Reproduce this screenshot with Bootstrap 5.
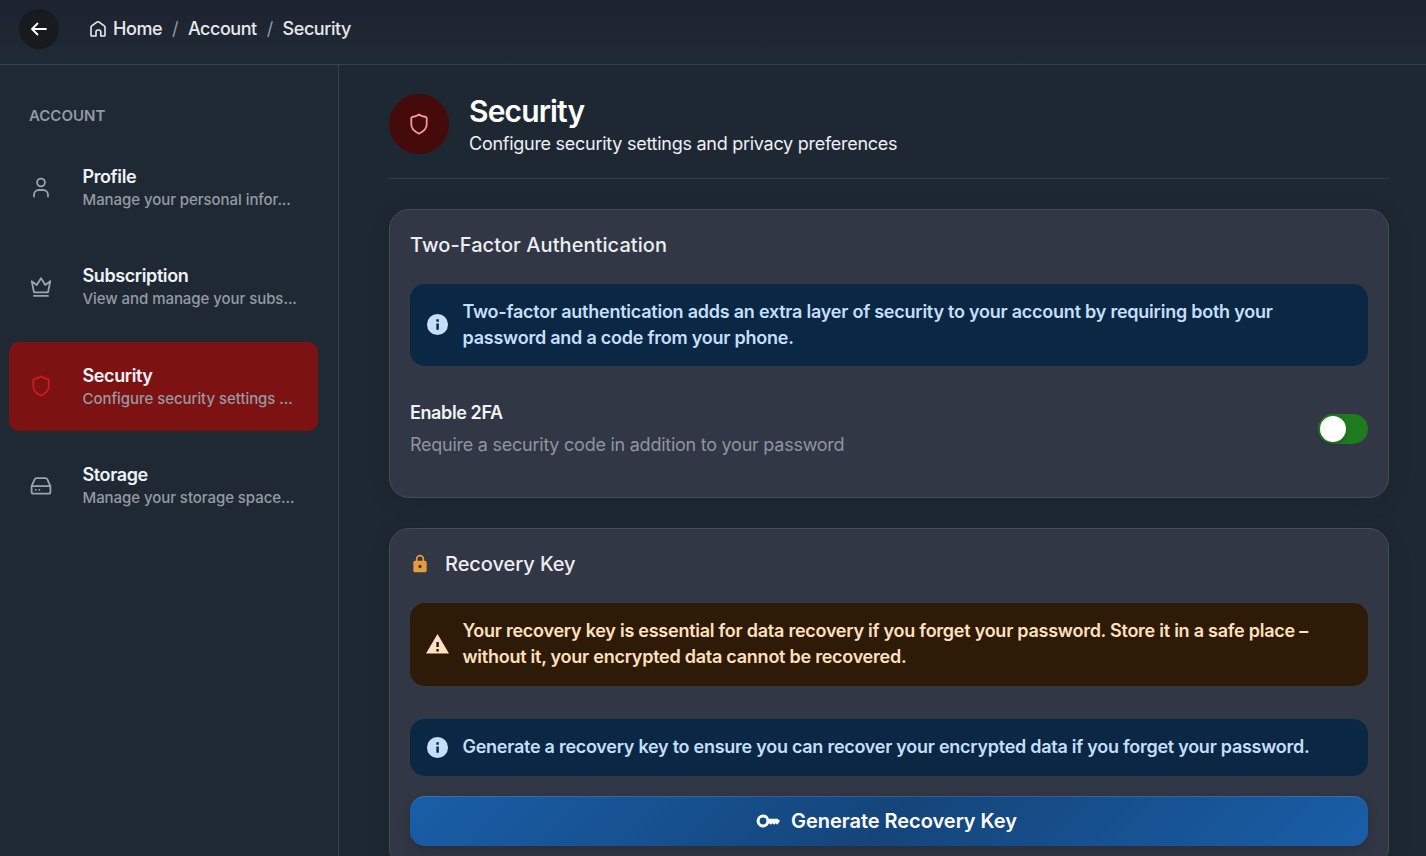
<!DOCTYPE html>
<html lang="en" data-bs-theme="dark">
<head>
<meta charset="utf-8">
<meta name="viewport" content="width=device-width, initial-scale=1">
<title>Security</title>
<link href="https://cdn.jsdelivr.net/npm/bootstrap@5.3.0/dist/css/bootstrap.min.css" rel="stylesheet">
<style>
  body { font-family: Inter, "Liberation Sans", sans-serif; font-size: 18px; color: #f0f2f8; background: #1e2832; height: 100vh; }
  svg { flex: none; display: block; }
  .line { fill: none; stroke: currentColor; stroke-width: 1.8; stroke-linecap: round; stroke-linejoin: round; }
  .topbar { height: 65px; padding: 0 19px 7px; border-bottom: 1px solid #364049; background: linear-gradient(#1e2231 0%, #1e2832 65%, #1f2a38 100%); }
  .back-btn { width: 40px; height: 40px; background: #181b1d; }
  .crumbs { margin-left: 31px; letter-spacing: -.45px; line-height: 27px; font-weight: 500; color: #e6e9ed; }
  .crumbs svg { margin-right: 7px; stroke-width: 1.6; }
  .crumbs .sep { color: #91979d; font-weight: 400; margin: 0 9.9px; }
  .sidebar { width: 339px; flex: none; border-right: 1px solid #36404a; background: #1e2934; }
  .side-title { font-size: 15px; font-weight: 600; color: #9299a1; line-height: 22px; margin: 40px 0 16px 29px; }
  .side-list { padding: 0 20px 0 9px; gap: 10.4px; }
  .side-item { height: 89px; border-radius: 10px; padding: 0 18px 0 20px; color: #9da3ad; }
  .side-item.current { background: #7d1212; }
  .side-item.current > svg { color: #c81e1e; }
  .side-item .texts { margin-left: 29.5px; width: 217px; padding-bottom: 1px; }
  .side-item .t { font-size: 18px; font-weight: 600; line-height: 25px; color: #f0f2f8; letter-spacing: -.4px; }
  .side-item .d { font-size: 15px; font-weight: 500; line-height: 21px; color: #959ba3; letter-spacing: -.06px; }
  .content { width: 1000px; margin-left: 50px; flex: none; }
  .page-head { padding-top: 29px; height: 114px; border-bottom: 1px solid #313c47; margin-bottom: 30px; }
  .shield-circle { width: 60px; height: 60px; background: #450a0a; color: #f69a9a; }
  .page-head h1 { font-size: 30px; font-weight: 600; line-height: 34px; padding-bottom: 2px; letter-spacing: -.85px; margin: 0; }
  .page-head p { margin: 0; line-height: 27px; letter-spacing: -.27px; color: #eef0f5; }
  .panel { background: #313744; border: 1px solid #424d58; border-radius: 20px; padding: 20px; box-shadow: 0 4px 24px rgba(0,0,0,.1); }
  .panel h2 { font-size: 20px; font-weight: 500; line-height: 30px; margin: 0; color: #eceef3; }
  .two-factor { height: 289px; margin-bottom: 30px; }
  .two-factor h2 { letter-spacing: .08px; }
  .recovery { height: 340px; flex: none; }
  .recovery h2 { letter-spacing: -.06px; }
  .notice { border-radius: 15px; padding: 0 16px; font-weight: 600; line-height: 26px; gap: 13.5px; letter-spacing: -.25px; }
  .two-factor .notice { letter-spacing: -.235px; }
  .notice.info { background: #0a2743; color: #c5dffb; }
  .notice.warn { background: #2d1a07; color: #ffe0bf; }
  .opt-name { font-weight: 600; line-height: 32px; letter-spacing: -.4px; }
  .opt-note { line-height: 32px; letter-spacing: -.25px; color: #8f959e; }
  .toggle { width: 50px; height: 30px; border-radius: 15px; background: #1f7a1f; padding: 2px; }
  .toggle span { width: 26px; height: 26px; background: #fff; box-shadow: 0 2px 4px rgba(0,0,0,.2); }
  .gen-btn { height: 50px; border: 0; border-radius: 15px; color: #fff; font-size: 20px; font-weight: 600; letter-spacing: -.03px; padding: 0 5px 0 0; gap: 11px; margin-top: 20px; background: linear-gradient(135deg, #195ea8 0%, #14457a 50%, #195ea8 100%); box-shadow: inset 0 1px 0 rgba(255,255,255,.12), 0 4px 12px rgba(0,0,0,.18); }
</style>
</head>
<body class="d-flex flex-column overflow-hidden">
<header class="topbar d-flex align-items-center flex-shrink-0">
  <a href="#" class="back-btn rounded-circle d-flex align-items-center justify-content-center text-white" aria-label="Back">
    <svg class="line" width="20" height="20" viewBox="0 0 20 20"><path d="M17 10H3.3M8.500 4.500 3 10l5.500 5.500"/></svg>
  </a>
  <nav class="crumbs d-flex align-items-center">
    <svg class="line" width="16" height="16" viewBox="0 0 16 16"><path d="M1 14.400V6.100Q1 5.600 1.400 5.200L6.900 1.100Q8 .4 9.100 1.100l5.500 4.100q.4.4.4.9v8.300q0 .6-.6.6h-3.600v-3.900q0-2.100-2.100-2.100h-.6q-2.100 0-2.100 2.100V15H1.600Q1 15 1 14.400Z"/></svg>
    <span>Home</span><span class="sep">/</span><span>Account</span><span class="sep">/</span><span>Security</span>
  </nav>
</header>
<div class="d-flex flex-grow-1 overflow-hidden">
  <aside class="sidebar">
    <div class="side-title">ACCOUNT</div>
    <nav class="side-list d-flex flex-column">
      <div class="side-item d-flex align-items-center">
        <svg class="line" width="24" height="24" viewBox="0 0 24 24"><circle cx="12" cy="6.500" r="3.900"/><path d="M5 20.500v-1.500a5 5 0 0 1 5-5h4a5 5 0 0 1 5 5v1.500"/></svg>
        <div class="texts"><div class="t">Profile</div><div class="d text-truncate">Manage your personal infor...</div></div>
      </div>
      <div class="side-item d-flex align-items-center">
        <svg class="line" width="24" height="24" viewBox="0 0 24 24"><path d="M5 17.400h14L21.300 6.100l-5 3.900L12 3.300 7.700 10l-5-3.900ZM5 20.900h14"/></svg>
        <div class="texts"><div class="t">Subscription</div><div class="d text-truncate">View and manage your subs...</div></div>
      </div>
      <div class="side-item current d-flex align-items-center">
        <svg class="line" width="24" height="24" viewBox="0 0 24 24"><path d="M12 2.500C9.900 4 7.400 4.700 5 5Q4.300 5.200 4.300 6v6.500c0 4.700 3.800 7.400 7.700 9.200 3.900-1.800 7.700-4.500 7.700-9.200V6q0-.8-.7-1C16.600 4.700 14.100 4 12 2.500Z"/></svg>
        <div class="texts"><div class="t">Security</div><div class="d text-truncate">Configure security settings ...</div></div>
      </div>
      <div class="side-item d-flex align-items-center">
        <svg class="line" width="24" height="24" viewBox="0 0 24 24"><path d="M2.600 12.200 5.700 5.300Q6.200 4.200 7.400 4.200h9.200q1.200 0 1.700 1.100l3.100 6.900v5.800q0 1.700-1.700 1.700H4.300q-1.700 0-1.700-1.700ZM2.600 12.200h18.800M6.700 15.900h.1M10.300 15.900h.1"/></svg>
        <div class="texts"><div class="t">Storage</div><div class="d text-truncate">Manage your storage space...</div></div>
      </div>
    </nav>
  </aside>
  <main class="content">
    <div class="page-head d-flex align-items-start">
      <div class="shield-circle rounded-circle d-flex align-items-center justify-content-center">
        <svg class="line" width="24" height="24" viewBox="0 0 24 24"><path d="M12 2.500C9.900 4 7.400 4.700 5 5Q4.300 5.200 4.300 6v6.500c0 4.700 3.800 7.400 7.700 9.200 3.900-1.800 7.700-4.500 7.700-9.200V6q0-.8-.7-1C16.600 4.700 14.100 4 12 2.500Z"/></svg>
      </div>
      <div class="ms-3 ps-1"><h1>Security</h1><p>Configure security settings and privacy preferences</p></div>
    </div>
    <section class="panel two-factor">
      <h2>Two-Factor Authentication</h2>
      <div class="notice info d-flex align-items-center" style="margin-top:24px;height:82px">
        <svg style="margin-bottom:2px" width="23" height="23" viewBox="0 0 24 24" fill="currentColor"><path fill-rule="evenodd" d="M12 1a11 11 0 1 0 0 22 11 11 0 0 0 0-22Zm-1.200 10h2.600v6.600h-2.600Zm0-4.400h2.600V9h-2.600Z"/></svg>
        <div>Two-factor authentication adds an extra layer of security to your account by requiring both your<br>password and a code from your phone.</div>
      </div>
      <div class="d-flex align-items-center justify-content-between" style="margin-top:31px">
        <div><div class="opt-name">Enable 2FA</div><div class="opt-note">Require a security code in addition to your password</div></div>
        <div class="toggle" role="switch" aria-checked="true"><span class="d-block rounded-circle"></span></div>
      </div>
    </section>
    <section class="panel recovery">
      <div class="d-flex align-items-center" style="gap:15px">
        <svg width="20" height="20" viewBox="0 0 24 24" fill="#e99a3e"><path fill-rule="evenodd" d="M18 8h-1V6A5 5 0 0 0 7 6v2H6a2 2 0 0 0-2 2v10a2 2 0 0 0 2 2h12a2 2 0 0 0 2-2V10a2 2 0 0 0-2-2ZM9 6a3 3 0 0 1 6 0v2H9Zm3 11a2 2 0 1 1 0-4 2 2 0 0 1 0 4Z"/></svg>
        <h2>Recovery Key</h2>
      </div>
      <div class="notice warn d-flex align-items-center" style="margin-top:24px;height:83px">
        <svg width="23" height="23" viewBox="0 0 24 24" fill="currentColor"><path fill-rule="evenodd" d="M0 21.500h24L12 1ZM10.800 16.700h2.600v2.500h-2.600Zm0-7.300h2.600v5.200h-2.600Z"/></svg>
        <div style="padding-bottom:2px">Your recovery key is essential for data recovery if you forget your password. Store it in a safe place –<br>without it, your encrypted data cannot be recovered.</div>
      </div>
      <div class="notice info d-flex align-items-center" style="margin-top:33px;height:57px">
        <svg width="23" height="23" viewBox="0 0 24 24" fill="currentColor"><path fill-rule="evenodd" d="M12 1a11 11 0 1 0 0 22 11 11 0 0 0 0-22Zm-1.200 10h2.600v6.600h-2.600Zm0-4.400h2.600V9h-2.600Z"/></svg>
        <div style="padding-bottom:2px;letter-spacing:-.265px">Generate a recovery key to ensure you can recover your encrypted data if you forget your password.</div>
      </div>
      <button class="gen-btn w-100 d-flex align-items-center justify-content-center">
        <svg width="24" height="24" viewBox="0 0 24 24" fill="currentColor"><path fill-rule="evenodd" d="M7 5.600a6.400 6.400 0 1 0 5.900 8.900h.6l1.300 1.300 1.600-1.500 1.600 1.500 1.700-1.600 1.600 1.500L24 12l-2.300-2.300h-8.800A6.400 6.400 0 0 0 7 5.600Zm0 3a3.400 3.400 0 1 1 0 6.800 3.400 3.400 0 0 1 0-6.800Z"/></svg>
        <span>Generate Recovery Key</span>
      </button>
    </section>
  </main>
</div>
<script src="https://cdn.jsdelivr.net/npm/bootstrap@5.3.0/dist/js/bootstrap.bundle.min.js"></script>
</body>
</html>
